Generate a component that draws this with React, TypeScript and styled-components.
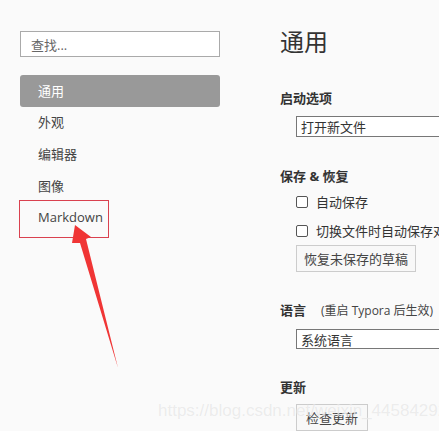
import React from "react";
import styled, { createGlobalStyle } from "styled-components";

const Global = createGlobalStyle`
  html, body { margin: 0; padding: 0; }
  body {
    background: #fafafa;
    width: 439px;
    height: 431px;
    overflow: hidden;
    font-family: "Open Sans", "Noto Sans CJK SC", sans-serif;
    color: #333;
  }
`;

const Page = styled.div`
  position: relative;
  display: flex;
  width: 439px;
  height: 431px;
  padding-left: 20px;
  box-sizing: border-box;
  overflow: hidden;
`;

const Sidebar = styled.div`
  width: 200px;
  flex: none;
  padding-top: 31px;
  display: flex;
  flex-direction: column;
`;

const Search = styled.div`
  height: 26px;
  box-sizing: border-box;
  border: 1px solid #aaa;
  background: #fff;
  padding-left: 10px;
  display: flex;
  align-items: center;
  font-size: 13px;
  color: #666;
`;

const NavList = styled.div`
  margin-top: 18px;
  display: flex;
  flex-direction: column;
`;

const NavItem = styled.div<{ $active?: boolean }>`
  height: 32px;
  box-sizing: border-box;
  padding-bottom: ${(p) => (p.$active ? 2 : 4)}px;
  display: flex;
  align-items: center;
  padding-left: 18px;
  font-size: 13px;
  border-radius: 3px;
  background: ${(p) => (p.$active ? "#999" : "transparent")};
  color: ${(p) => (p.$active ? "#fff" : "#444")};
`;

const Content = styled.div`
  margin-left: 60px;
  padding-top: 26px;
  display: flex;
  flex-direction: column;
  align-items: flex-start;
  white-space: nowrap;
`;

const Title = styled.div`
  font-size: 24px;
  line-height: 32px;
  font-weight: 400;
  color: #333;
`;

const Heading = styled.div<{ $mt: number }>`
  margin-top: ${(p) => p.$mt}px;
  font-size: 13px;
  line-height: 18px;
  font-weight: 700;
  color: #333;
  display: flex;
  align-items: baseline;
`;

const Note = styled.span`
  font-weight: 400;
  font-size: 12px;
  margin-left: 15px;
  color: #444;
`;

const Select = styled.div<{ $h: number }>`
  margin-top: 9px;
  margin-left: 16px;
  width: 220px;
  height: ${(p) => p.$h}px;
  box-sizing: border-box;
  border: 1px solid #777;
  background: #fff;
  padding-left: 4px;
  display: flex;
  align-items: center;
  font-size: 13px;
  color: #333;
`;

const CheckRow = styled.div<{ $mt: number }>`
  margin-top: ${(p) => p.$mt}px;
  margin-left: 16px;
  height: 24px;
  display: flex;
  align-items: center;
  gap: 8px;
  font-size: 13px;
  color: #333;
`;

const Box = styled.span`
  width: 12px;
  height: 12px;
  box-sizing: border-box;
  border: 1px solid #555;
  border-radius: 2px;
  background: #fff;
`;

const Button = styled.div<{ $mt: number; $w: number }>`
  margin-top: ${(p) => p.$mt}px;
  margin-left: 16px;
  width: ${(p) => p.$w}px;
  height: 30px;
  box-sizing: border-box;
  border: 1px solid #ccc;
  background: #f8f8f8;
  display: flex;
  align-items: center;
  justify-content: center;
  font-size: 13px;
  color: #444;
`;

const Highlight = styled.div`
  position: absolute;
  left: 19px;
  top: 200px;
  width: 90px;
  height: 38px;
  box-sizing: border-box;
  border: 1px solid #d9414f;
`;

const Arrow = styled.svg`
  position: absolute;
  left: 0;
  top: 0;
  pointer-events: none;
`;

const Watermark = styled.div`
  position: absolute;
  left: 158px;
  top: 401px;
  font-family: "Liberation Sans", Arial, sans-serif;
  font-size: 17px;
  color: rgba(190, 190, 190, 0.3);
  text-shadow: 0 0 1px rgba(255, 255, 255, 0.9);
  white-space: nowrap;
  pointer-events: none;
`;

export default function App() {
  return (
    <>
      <Global />
      <Page>
        <Sidebar>
          <Search>查找...</Search>
          <NavList>
            <NavItem $active>通用</NavItem>
            <NavItem>外观</NavItem>
            <NavItem>编辑器</NavItem>
            <NavItem>图像</NavItem>
            <NavItem>Markdown</NavItem>
          </NavList>
        </Sidebar>
        <Content>
          <Title>通用</Title>
          <Heading $mt={31}>启动选项</Heading>
          <Select $h={21}>打开新文件</Select>
          <Heading $mt={30}>保存 &amp; 恢复</Heading>
          <CheckRow $mt={6}>
            <Box />
            自动保存
          </CheckRow>
          <CheckRow $mt={8}>
            <Box />
            切换文件时自动保存对应文件
          </CheckRow>
          <Button $mt={4} $w={120}>恢复未保存的草稿</Button>
          <Heading $mt={29}>
            语言<Note>(重启 Typora 后生效)</Note>
          </Heading>
          <Select $h={20}>系统语言</Select>
          <Heading $mt={29}>更新</Heading>
          <Button $mt={8} $w={72}>检查更新</Button>
        </Content>
        <Highlight />
        <Arrow width="439" height="431" viewBox="0 0 439 431">
          <polygon
            points="75,225 91,237 86,239 118,368 80,243 72,243"
            fill="#f03535"
          />
        </Arrow>
        <Watermark>https://blog.csdn.net/weixin_44584292</Watermark>
      </Page>
    </>
  );
}
